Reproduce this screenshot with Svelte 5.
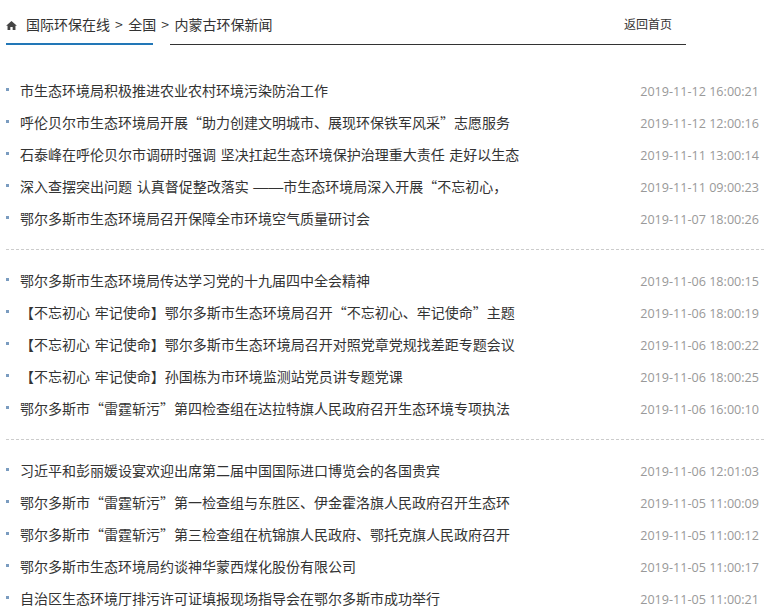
<script>
  const groups = [
    [
      ['市生态环境局积极推进农业农村环境污染防治工作', '2019-11-12 16:00:21'],
      ['呼伦贝尔市生态环境局开展“助力创建文明城市、展现环保铁军风采”志愿服务', '2019-11-12 12:00:16'],
      ['石泰峰在呼伦贝尔市调研时强调 坚决扛起生态环境保护治理重大责任 走好以生态', '2019-11-11 13:00:14'],
      ['深入查摆突出问题 认真督促整改落实 ——市生态环境局深入开展“不忘初心，', '2019-11-11 09:00:23'],
      ['鄂尔多斯市生态环境局召开保障全市环境空气质量研讨会', '2019-11-07 18:00:26']
    ],
    [
      ['鄂尔多斯市生态环境局传达学习党的十九届四中全会精神', '2019-11-06 18:00:15'],
      ['【不忘初心 牢记使命】鄂尔多斯市生态环境局召开“不忘初心、牢记使命”主题', '2019-11-06 18:00:19'],
      ['【不忘初心 牢记使命】鄂尔多斯市生态环境局召开对照党章党规找差距专题会议', '2019-11-06 18:00:22'],
      ['【不忘初心 牢记使命】孙国栋为市环境监测站党员讲专题党课', '2019-11-06 18:00:25'],
      ['鄂尔多斯市“雷霆斩污”第四检查组在达拉特旗人民政府召开生态环境专项执法', '2019-11-06 16:00:10']
    ],
    [
      ['习近平和彭丽媛设宴欢迎出席第二届中国国际进口博览会的各国贵宾', '2019-11-06 12:01:03'],
      ['鄂尔多斯市“雷霆斩污”第一检查组与东胜区、伊金霍洛旗人民政府召开生态环', '2019-11-05 11:00:09'],
      ['鄂尔多斯市“雷霆斩污”第三检查组在杭锦旗人民政府、鄂托克旗人民政府召开', '2019-11-05 11:00:12'],
      ['鄂尔多斯市生态环境局约谈神华蒙西煤化股份有限公司', '2019-11-05 11:00:17'],
      ['自治区生态环境厅排污许可证填报现场指导会在鄂尔多斯市成功举行', '2019-11-05 11:00:21']
    ]
  ];
</script>

<div class="page">
  <header class="head">
    <div class="crumbs">
      <svg class="home" viewBox="0 0 12 10" width="11" height="9" aria-hidden="true">
        <path d="M6 0 L12 5.4 L10.4 5.4 L10.4 10 L7.3 10 L7.3 6.6 L4.7 6.6 L4.7 10 L1.6 10 L1.6 5.4 L0 5.4 Z" fill="#444" />
      </svg>
      <a class="here">国际环保在线</a>
      <span class="sep">&gt;</span>
      <a>全国</a>
      <span class="sep">&gt;</span>
      <a class="tail">内蒙古环保新闻</a>
    </div>
    <div class="rest">
      <a class="back">返回首页</a>
    </div>
  </header>

  {#each groups as group, i}
    <ul class:divided={i < groups.length - 1}>
      {#each group as [title, time]}
        {@const parts = title.split('——')}
        <li>
          <span class="title">{#if parts.length > 1}{parts[0]}<span class="dash">——</span>{parts[1]}{:else}{title}{/if}</span>
          <span class="time">{time}</span>
        </li>
      {/each}
    </ul>
  {/each}
</div>

<style>
  :global(body) {
    margin: 0;
    background: #fff;
  }
  .page {
    width: 758px;
    margin-left: 6px;
    height: 611px;
    overflow: hidden;
    font-family: "Noto Sans CJK SC", sans-serif;
    color: #333;
  }
  .head {
    display: flex;
    width: 680px;
    height: 45px;
  }
  .crumbs {
    width: 147px;
    flex: none;
    height: 45px;
    box-sizing: border-box;
    border-bottom: 2px solid #2277b7;
    white-space: nowrap;
    font-size: 14px;
    line-height: 49px;
    display: flex;
    align-items: flex-start;
  }
  .home {
    margin-top: 21px;
    flex: none;
  }
  .here {
    margin-left: 9px;
  }
  .sep {
    margin: 0 5.5px 0 5px;
    font-size: 14px;
  }
  .rest {
    margin-left: 17px;
    flex: 1;
    height: 45px;
    box-sizing: border-box;
    border-bottom: 1px solid #333;
    text-align: right;
    padding-right: 14px;
    font-size: 12px;
    line-height: 48px;
  }
  ul {
    list-style: none;
    margin: 0;
    padding: 30px 0 14px;
  }
  ul + ul {
    padding-top: 15px;
  }
  .divided {
    border-bottom: 1px dashed #ccc;
  }
  li {
    display: flex;
    justify-content: space-between;
    height: 32px;
    line-height: 31px;
    font-size: 14px;
    position: relative;
    padding-left: 14px;
    padding-right: 5px;
  }
  li::before {
    content: "";
    position: absolute;
    left: 0;
    top: 13px;
    width: 3px;
    height: 3px;
    background: #7a9cc0;
  }
  .title {
    white-space: nowrap;
    word-spacing: 1.5px;
  }
  .dash {
    font-family: "Liberation Sans", sans-serif;
    font-size: 15px;
  }
  .time {
    font-family: "Open Sans", sans-serif;
    color: #999;
    font-size: 12.6px;
    line-height: 33px;
  }
</style>
